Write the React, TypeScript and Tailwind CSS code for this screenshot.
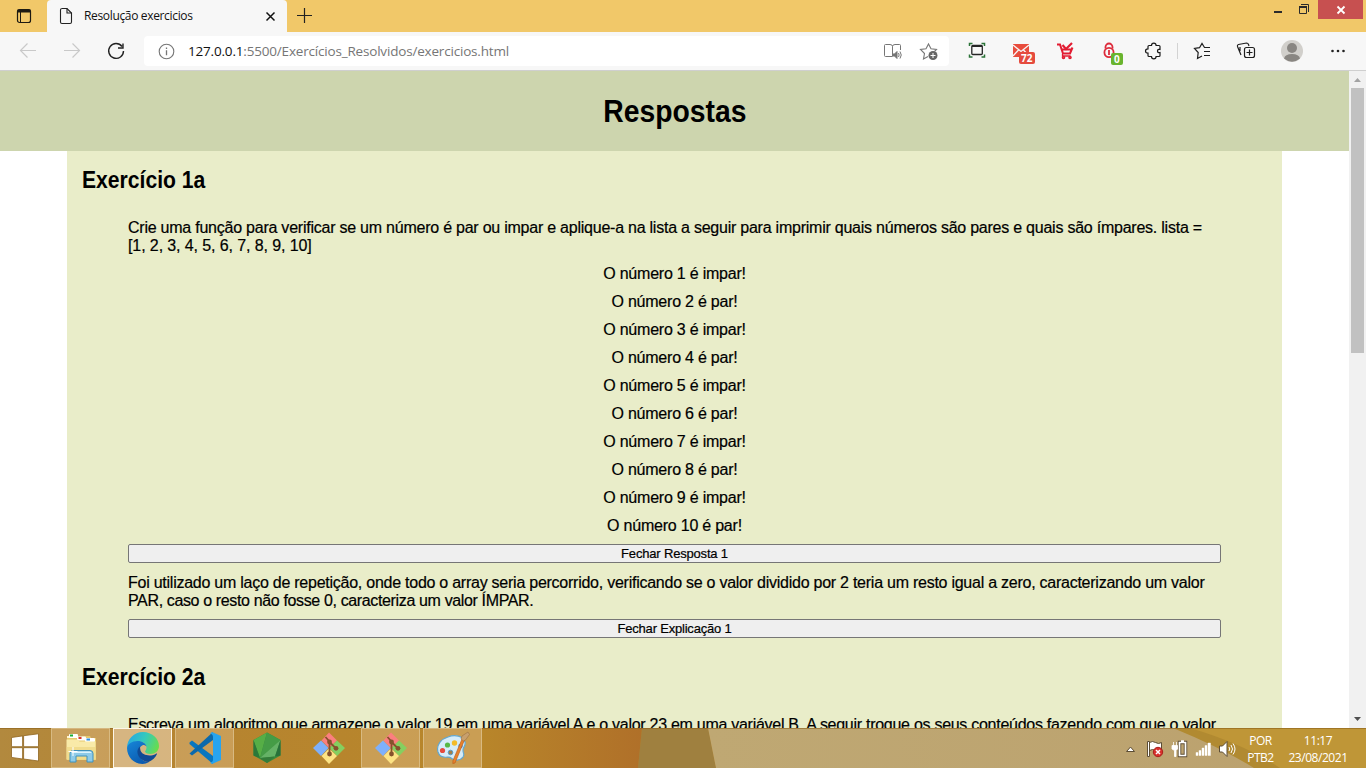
import React from 'react';

const GitIcon = () => (
  <svg width="34" height="34" viewBox="0 0 34 34">
    <path d="M17 1.500 25 9.500 17 17 9.500 9.500Z" fill="#fb7f7f" />
    <path d="M9 9.500 16.500 17 9 25 1 17Z" fill="#7eb0fb" />
    <path d="M25 9.500 33 17 25 25 17.500 17Z" fill="#85cf60" />
    <path d="M17 17.500 25 25 17 33 9.500 25Z" fill="#fde384" />
    <path d="M13.500 6 17.500 10.500V23M17.500 11 24 17.500" stroke="#86522c" strokeWidth="1.800" fill="none" />
    <circle cx="17.500" cy="11" r="2.400" fill="#86522c" />
    <circle cx="17.500" cy="23" r="2.400" fill="#86522c" />
    <circle cx="24" cy="17.300" r="2.400" fill="#86522c" />
  </svg>
);

const WindowsIcon = () => (
  <svg width="30" height="30" viewBox="0 0 30 30" stroke="#8f651f" strokeWidth="0.8">
    <path d="M1.500 4.500 12.600 2.900V13.700H1.500ZM13.600 2.700 28.500.8V13.700H13.600ZM1.500 14.700H12.600V26L1.500 24.400ZM13.600 14.700H28.500V28L13.600 26Z" fill="#fff" />
  </svg>
);

const ExplorerIcon = () => (
  <svg width="34" height="34" viewBox="0 0 34 34">
    <path d="M3 5h11l1 2h3V5h8l1 2h5v22H3Z" fill="#e5c96b" />
    <path d="M3 5h9l2 2h-11Z" fill="#fff6cf" />
    <rect x="5" y="3" width="9" height="4" rx="1" fill="#fff" />
    <rect x="6" y="3.500" width="3" height="2" fill="#1aae35" />
    <rect x="13" y="5.500" width="9" height="4" rx="1" fill="#fff" />
    <rect x="14.500" y="6" width="3" height="2" fill="#d8372c" />
    <rect x="21" y="7" width="10" height="4" rx="1" fill="#fff" />
    <rect x="22.500" y="7.500" width="3.500" height="2" fill="#2f8fe0" />
    <path d="M2.500 8.500h11l2 2h16v18h-29Z" fill="#f9eaa8" />
    <path d="M2.500 16h29v12.500h-29Z" fill="#eed581" opacity=".7" />
    <path d="M6 31V22.500q0-3 3-3h17q3 0 3 3V31h-6v-6H12v6Z" fill="#8dcbe9" stroke="#3f91bb" strokeWidth="1" />
    <path d="M7.500 22q0-1.500 2-1.500h16q2 0 2 1.500Z" fill="#dcf4fd" />
    <path d="M9 16v9M4.500 20.500h9" stroke="#fff" strokeWidth="1" />
  </svg>
);

const EdgeIcon = () => (
  <svg width="34" height="34" viewBox="0 0 34 34">
    <defs>
      <linearGradient id="edgeTop" x1="0" y1=".3" x2="1" y2=".6">
        <stop offset="0" stopColor="#27a8e2" />
        <stop offset=".5" stopColor="#35c9bd" />
        <stop offset="1" stopColor="#69dd4b" />
      </linearGradient>
      <linearGradient id="edgeLeft" x1="0" y1="0" x2=".6" y2="1">
        <stop offset="0" stopColor="#1786d8" />
        <stop offset="1" stopColor="#0b5bb0" />
      </linearGradient>
    </defs>
    <path d="M1 17C1 8 8 1 17 1s16 6.500 16 14c0 5-4 8-8.500 8-3.500 0-5.500-1.500-5.500-2.500 0-.8 1.500-1.500 1.500-4 0-3-3-6-7.500-6C7 10.500 2 14 1 17Z" fill="url(#edgeTop)" />
    <path d="M1 17c.5-4 5-7 10.500-7 5 0 8.500 2.500 9 5.500-1-1.200-2.400-1.500-3.500-1.500-3 1.500-4.500 4-4.500 7 0 5 4.500 10 10.500 10-2 1.300-4.500 2-6.500 2C8 33 1 26 1 17Z" fill="url(#edgeLeft)" />
    <path d="M14 15.500c-2 1.500-3 4-2.500 6.500.8 4.500 5 8.500 11 9 4-1.500 7-4.500 8.500-8-.3-.6-.8-.4-1.300-.1-5.700 3-13.700 1.300-15.200-3.400-.4-1.500-.4-2.700-.5-4Z" fill="#104a94" />
  </svg>
);

const CodeIcon = () => (
  <svg width="34" height="34" viewBox="0 0 34 34">
    <path d="m1.500 11.500 2.500-2 21 15.500v8L1.500 13Z" fill="#0876bf" />
    <path d="M1.500 22.500 25 1v8L4 24.500l-2.500-2Z" fill="#0b69ac" />
    <path d="M24 1 33 5v24l-9 4-2-1.500q3 0 3-3V6q0-3-3-3.500Z" fill="#27a4ef" />
  </svg>
);

const GemIcon = () => (
  <svg width="34" height="34" viewBox="0 0 34 34">
    <path d="M17 1.500 30.500 9v15.500L17 32 3.500 24.500V9Z" fill="#398a3c" />
    <path d="M17 1.500 3.500 9 10 27Z" fill="#56ae46" />
    <path d="M3.500 9v15.500L10 27Z" fill="#2c7839" />
    <path d="M17 1.500 30.500 9 10 27Z" fill="#459c46" />
    <path d="M30.500 9 25 25.500 10 27Z" fill="#65b266" />
    <path d="M30.500 9v15.500L25 25.500Z" fill="#28713a" />
    <path d="m10 27 15-1.500L17 32Z" fill="#347c39" />
  </svg>
);

const PaintIcon = () => (
  <svg width="34" height="34" viewBox="0 0 34 34">
    <path d="M2 21C0 14 5 8 12 6c7-3 15-1 17 5 1 4-2 5-2 8 0 4 2 4 0 7-3 4-9 4-12 1-2-2-4 0-7-1-3 0-5-2-6-5Z" fill="#d6ecf9" stroke="#63a7cf" strokeWidth="1.200" />
    <circle cx="6.500" cy="19.500" r="2.600" fill="#e64b3e" />
    <circle cx="11.500" cy="14" r="2.600" fill="#57b946" />
    <circle cx="18.500" cy="12" r="2.700" fill="#f3bb2b" />
    <circle cx="24.500" cy="15" r="2.200" fill="#3480d5" />
    <circle cx="14.500" cy="21.500" r="2.300" fill="#9e8050" stroke="#5b9dc8" />
    <path d="m26 8 2.500 1L19 32l-2.200.5.200-3Z" fill="#e8812c" stroke="#b85918" strokeWidth=".6" />
    <path d="m25 8 1-3 6-4 1.500 2.500-4 5.500-2 1Z" fill="#c8a06d" stroke="#9a7043" strokeWidth=".6" />
  </svg>
);

const TaskButton = ({ children, active = false, bare = false }: { children: React.ReactNode; active?: boolean; bare?: boolean }) => (
  <div
    className={
      bare
        ? 'flex h-10 w-[59px] items-center justify-center'
        : active
          ? 'flex h-10 w-[59px] items-center justify-center border border-[#fdf6e8] bg-[#ecd6b4]/60'
          : 'flex h-10 w-[59px] items-center justify-center border border-[#dcc08c]/80 bg-[#e0bd88]/45'
    }
  >
    {children}
  </div>
);

const TabStrip = () => (
  <div className="flex h-8 shrink-0 bg-[#f1c869]">
    <div className="flex w-[47px] items-center justify-center">
      <svg width="16" height="16" viewBox="0 0 16 16" fill="none" stroke="#1d1a12">
        <rect x="1.500" y="1.500" width="13" height="13" rx="2" strokeWidth="1.200" />
        <path d="M1.500 3h13" strokeWidth="3" />
        <path d="M4.500 4v10" />
      </svg>
    </div>
    <div className="flex w-[240px] items-center rounded-t bg-[#f7f7f7] pl-[11px] pr-[10px]">
      <svg width="16" height="18" viewBox="0 0 16 18" fill="none" stroke="#222" strokeWidth="1.100">
        <path d="M3.500 1.500h5.500l4.500 4.500v9q0 1.500-1.500 1.500H4q-1.500 0-1.500-1.500V3q0-1.500 1.500-1.500Z" />
        <path d="M9 1.500V6h4.500" />
      </svg>
      <span className="ml-[10px] flex-1 whitespace-nowrap font-['Open_Sans',sans-serif] text-[12px] tracking-[-0.34px] text-[#111]">Resolução exercicios</span>
      <svg width="13" height="13" viewBox="0 0 13 13" stroke="#111" strokeWidth="1.500"><path d="m2.500 2.500 8 8m0-8-8 8" /></svg>
    </div>
    <svg width="34" height="32" viewBox="0 0 34 32" stroke="#222" strokeWidth="1.200"><path d="M10 15.500h15M17.500 8v15" /></svg>
    <div className="flex-1" />
    <div className="flex h-[19px]">
      <svg width="50" height="19" viewBox="0 0 50 19" fill="none" stroke="#2b2b2b">
        <path d="M6 12h8" strokeWidth="2" />
        <path d="M31.500 6.500h7v7h-7ZM33 4.500h7.500V12" />
        <path d="M31 7h8" strokeWidth="2" />
      </svg>
      <div className="mr-[3px] flex w-[45px] items-center justify-center bg-[#c75050]">
        <svg width="10" height="10" viewBox="0 0 10 10" stroke="#fff" strokeWidth="1.800"><path d="m1.500 1.500 7 7m0-7-7 7" /></svg>
      </div>
    </div>
  </div>
);

const Toolbar = () => (
  <div className="flex h-[39px] shrink-0 items-center border-b border-[#cfcfcf] bg-[#f7f7f7]">
    <svg width="144" height="38" viewBox="0 0 144 38" fill="none" strokeWidth="1.200">
      <g stroke="#c9c9c9">
        <path d="M36 18.500H20.500M27.500 11.500l-7 7 7 7" />
        <path d="M64 18.500h15.500M72.500 11.500l7 7-7 7" />
      </g>
      <path d="M122 14.500A7.400 7.400 0 1 0 123.500 19M123 11.500v4.500h-5" stroke="#222" strokeWidth="1.400" />
    </svg>
    <div className="flex h-[30px] w-[805px] items-center rounded bg-white pl-[14px]">
      <svg width="17" height="17" viewBox="0 0 17 17" fill="none" stroke="#767676">
        <circle cx="8.500" cy="8.500" r="7.300" strokeWidth="1.100" />
        <path d="M8.500 7.300v5M8.500 4.500V6" strokeWidth="1.300" />
      </svg>
      <span className="ml-[13px] flex-1 whitespace-nowrap font-['Open_Sans',sans-serif] text-[13.500px] tracking-[-0.185px] text-[#767676]">
        <span className="text-[#111]">127.0.0.1</span>:5500/Exercícios_Resolvidos/exercicios.html
      </span>
      <svg width="66" height="30" viewBox="0 0 66 30" fill="none" stroke="#767676">
        <path d="M9 20.500H2.500q-1 0-1-1V9.500q0-1 1-1H7q2.500 0 2.500 2v10ZM9.500 10.500q0-2 2.500-2h4.500q1 0 1 1V14" />
        <path d="M10 18h1.500l2.500-2.500v7L11.500 20H10Z" fill="#767676" />
        <path d="M15.500 17q1.300 2 0 4M17 15.500q2.500 3.500 0 7" />
        <path d="m45 20.500-4.500 2.500 1-5.500-4-4 5.500-.8L45.500 8l2.500 4.700 5.500.8-2 2" strokeWidth="1.100" />
        <circle cx="50" cy="19.500" r="4.500" fill="#666" stroke="none" />
        <path d="M47.500 19.500h5M50 17v5" stroke="#fff" />
      </svg>
    </div>
    <svg width="417" height="38" viewBox="0 0 417 38" fill="none">
      <path d="M20.500 14V11.500h3M32.500 11.500h3V14M20.500 22.500v2.500h3M32.500 25h3V22.500" stroke="#2b7338" strokeWidth="1.500" />
      <rect x="22.800" y="13.500" width="10.500" height="9" rx="1" stroke="#252525" strokeWidth="1.300" />
      <path d="M23 14h10" stroke="#252525" strokeWidth="2" />
      <path d="M64 12h16v13H64Z" fill="#e84c3d" />
      <path d="m64 13 8 6.500 8-6.500M64 24l5.500-6M80 24l-5.500-6" stroke="#f7f7f7" strokeWidth="1.300" />
      <rect x="70" y="20" width="16" height="12" rx="2" fill="#e54b3e" />
      <text x="72" y="30" fill="#fff" fontFamily="Open Sans, sans-serif" fontSize="10" fontWeight="700">72</text>
      <g stroke="#e21c32" strokeWidth="2">
        <path d="M108 12.500h3l3 9h7l2.500-6M112 17.500h10" />
        <path d="m113.500 13 3.500 4 6-6" strokeWidth="2.200" />
        <path d="M113.500 22v2h8" strokeWidth="1.300" />
        <circle cx="114.500" cy="25.500" r=".8" />
        <circle cx="121" cy="25.500" r=".8" />
      </g>
      <g stroke="#dd2b3b" strokeWidth="1.800">
        <path d="M156.500 16.500v-1.500a3.500 3.500 0 0 1 7 0v1.500" />
        <circle cx="160" cy="20.500" r="4.600" />
        <path d="M160 18v5" />
      </g>
      <rect x="162" y="21" width="12" height="12" rx="2" fill="#69b42e" />
      <text x="165" y="30.500" fill="#fff" fontFamily="Open Sans, sans-serif" fontSize="10" fontWeight="700">0</text>
      <path d="M199.500 13.500h2.500q0-2.300 2.300-2.300t2.300 2.300h2.900q1 0 1 1v3q-2.500-.5-2.500 1.500t2.500 1.500v3q0 1-1 1h-2.900q0 2.300-2.300 2.300t-2.300-2.300h-2.500q-1 0-1-1v-2.300q-2.500 0-2.500-2.200t2.500-2.200v-2.300q0-1 1-1Z" stroke="#1b1b1b" strokeWidth="1.200" transform="translate(.5 0)" />
      <path d="M228.500 11v16" stroke="#d3d3d3" />
      <g stroke="#1f1f1f" strokeWidth="1.200">
        <path d="M253 24 248.500 26.500 249.200 20.500 245.500 16.500 250.500 15.700 253 11.500 255.500 15.500H261M255 19.500h6M255 23.500h6" />
        <path d="m292 23-3.500-8.500q-.5-1.500 1-2l8-1.500q1.500 0 2 1.500l.5 1.500M291 15v4" />
        <rect x="295.500" y="15.500" width="10" height="10" rx="2" />
        <path d="M300.500 17.500v6M297.500 20.500h6" />
      </g>
      <circle cx="343" cy="19" r="11" fill="#d1cfcb" />
      <circle cx="343" cy="16" r="5" fill="#898682" />
      <path d="M335 26.500q1-4.500 8-4.500t8 4.500Q343 33 335 26.500Z" fill="#898682" />
      <g fill="#222">
        <circle cx="383.500" cy="19" r="1.300" />
        <circle cx="389" cy="19" r="1.300" />
        <circle cx="394.500" cy="19" r="1.300" />
      </g>
    </svg>
  </div>
);

const results = ['O número 1 é impar!', 'O número 2 é par!', 'O número 3 é impar!', 'O número 4 é par!', 'O número 5 é impar!', 'O número 6 é par!', 'O número 7 é impar!', 'O número 8 é par!', 'O número 9 é impar!', 'O número 10 é par!'];

const Page = () => (
  <div className="flex min-h-0 flex-1 bg-white font-['Liberation_Sans',Arial,sans-serif] text-black">
    <div className="flex w-[1349px] flex-col overflow-hidden">
      <header className="flex h-20 shrink-0 items-center justify-center bg-[#cdd5ae]">
        <h1 className="scale-x-[0.885] text-[32px] font-bold">Respostas</h1>
      </header>
      <main className="ml-[67px] w-[1215px] flex-1 whitespace-nowrap bg-[#e9edc9] pl-[15px] pt-[15px] text-base leading-[18px]">
        <h2 className="mb-[26px] w-fit origin-left scale-x-[0.88] text-2xl font-bold leading-[27px]">Exercício 1a</h2>
        <div className="ml-[46px] flex w-[1093px] flex-col gap-2.5 [-webkit-text-stroke:0.2px_#000]">
          <p>
            <span className="block tracking-[-0.235px]">Crie uma função para verificar se um número é par ou impar e aplique-a na lista a seguir para imprimir quais números são pares e quais são ímpares. lista =</span>
            <span className="block tracking-[-0.1px]">[1, 2, 3, 4, 5, 6, 7, 8, 9, 10]</span>
          </p>
          {results.map((line) => (
            <p key={line} className="text-center tracking-[-0.22px]">{line}</p>
          ))}
          <button className="-mt-px mb-px h-[19px] rounded-[2px] border border-[#767676] bg-[#efefef] text-[13px] leading-[17px] tracking-[-0.18px]">Fechar Resposta 1</button>
          <p className="h-9">
            <span className="block tracking-[-0.25px]">Foi utilizado um laço de repetição, onde todo o array seria percorrido, verificando se o valor dividido por 2 teria um resto igual a zero, caracterizando um valor</span>
            <span className="block tracking-[-0.36px]">PAR, caso o resto não fosse 0, caracteriza um valor ÍMPAR.</span>
          </p>
          <button className="-mt-px h-[19px] rounded-[2px] border border-[#767676] bg-[#efefef] text-[13px] leading-[17px] tracking-[-0.2px]">Fechar Explicação 1</button>
        </div>
        <h2 className="mb-[26px] mt-[25px] w-fit origin-left scale-x-[0.88] text-2xl font-bold leading-[27px]">Exercício 2a</h2>
        <p className="ml-[46px] tracking-[-0.275px] [-webkit-text-stroke:0.2px_#000]">Escreva um algoritmo que armazene o valor 19 em uma variável A e o valor 23 em uma variável B. A seguir troque os seus conteúdos fazendo com que o valor</p>
      </main>
    </div>
    <div className="flex w-[17px] flex-col items-center justify-between bg-[#f1f1f1]">
      <div className="flex flex-col items-center">
        <svg width="17" height="17" viewBox="0 0 17 17"><path d="m5 11 3.500-4 3.500 4Z" fill="#a3a3a3" /></svg>
        <div className="h-[265px] w-[13px] bg-[#c1c1c1]" />
      </div>
      <svg width="17" height="17" viewBox="0 0 17 17"><path d="m5 6 3.500 4L12 6Z" fill="#505050" /></svg>
    </div>
  </div>
);

const Taskbar = () => (
  <div className="relative flex h-10 shrink-0 overflow-hidden bg-[#b5812a]">
    <svg className="absolute inset-0" width="1366" height="40" viewBox="0 0 1366 40">
      <defs>
        <linearGradient id="barLeft">
          <stop offset="0" stopColor="#b2893e" />
          <stop offset=".3" stopColor="#b68430" />
          <stop offset=".75" stopColor="#b8862a" />
          <stop offset="1" stopColor="#b07029" />
        </linearGradient>
        <linearGradient id="barRight">
          <stop offset="0" stopColor="#bfa873" />
          <stop offset="1" stopColor="#bba16e" />
        </linearGradient>
      </defs>
      <path d="M0 0h642l-4 40H0Z" fill="url(#barLeft)" />
      <path d="M642 0h66l8 40h-78Z" fill="#9f803f" />
      <path d="M708 0h658v40H716Z" fill="url(#barRight)" />
      <path d="M1173 0h193v40h-112q-32-20-81-40Z" fill="#b18a31" />
      <path d="M1190 0h176v40h-86q-36-24-90-40Z" fill="#bf9637" />
      <path d="M0 .5h1366" stroke="#8c621c" opacity=".6" />
    </svg>
    <div className="relative flex flex-1 text-white">
      <div className="flex w-[51px] items-center justify-center pr-0.5"><WindowsIcon /></div>
      <div className="flex gap-[3px]">
        <TaskButton><ExplorerIcon /></TaskButton>
        <TaskButton active><EdgeIcon /></TaskButton>
        <TaskButton><CodeIcon /></TaskButton>
        <TaskButton bare><GemIcon /></TaskButton>
        <TaskButton bare><GitIcon /></TaskButton>
        <TaskButton><GitIcon /></TaskButton>
        <TaskButton><PaintIcon /></TaskButton>
      </div>
      <div className="flex-1" />
      <svg width="125" height="40" viewBox="0 0 125 40" stroke="#5c4d34" strokeWidth="1">
        <path d="m6.500 23.500 4-4.500 4 4.500Z" fill="#fff" />
        <path d="M27.500 13.500h2v15h-2ZM29.500 14.500q3-2 6 0t6 0v8q-3 2-6 0t-6 0Z" fill="#fff" />
        <circle cx="38" cy="24" r="4.700" fill="#d9302c" stroke="#a91f1c" />
        <path d="m36 22 4 4m0-4-4 4" stroke="#fff" strokeWidth="1.500" />
        <path d="M59.500 14.500h6v13h-6Z" fill="none" stroke="#5c4d34" strokeWidth="3.500" />
        <path d="M59.500 14.500h6v13h-6ZM61 13h3" fill="none" stroke="#fff" strokeWidth="1.700" />
        <path d="M53.500 14v4M56.500 14v4M52 17.500h5.500v3.500l-1.500 1.500v6h-1.500v-6L52 21Z" fill="#fff" stroke="#fff" strokeWidth=".8" />
        <path d="M76 24.500h2v3h-2ZM79 22.500h2v5h-2ZM82 20h2v7.500h-2ZM85 17.500h2v10h-2ZM88 15h2.500v12.500H88Z" fill="#fff" stroke="#fff" strokeWidth=".4" />
        <path d="M99.500 18h3l4.500-4.500v15l-4.500-4.500h-3Z" fill="#fff" />
        <path d="M109 19q1.500 2 0 4M111 17q3 4 0 8M113 15.500q4 5.500 0 11" fill="none" stroke="#fff" />
      </svg>
      <div className="flex w-[31px] flex-col items-center justify-center whitespace-nowrap pt-0.5 font-['Open_Sans',sans-serif] text-[12px] leading-[17px] tracking-[-0.5px]">
        <span>POR</span>
        <span>PTB2</span>
      </div>
      <div className="ml-[10px] mr-4 flex w-[64px] flex-col items-center justify-center whitespace-nowrap pt-0.5 font-['Open_Sans',sans-serif] text-[12px] leading-[17px] tracking-[-0.45px]">
        <span>11:17</span>
        <span>23/08/2021</span>
      </div>
    </div>
  </div>
);

export default function App() {
  return (
    <div className="flex h-[768px] w-[1366px] flex-col overflow-hidden">
      <TabStrip />
      <Toolbar />
      <Page />
      <Taskbar />
    </div>
  );
}
